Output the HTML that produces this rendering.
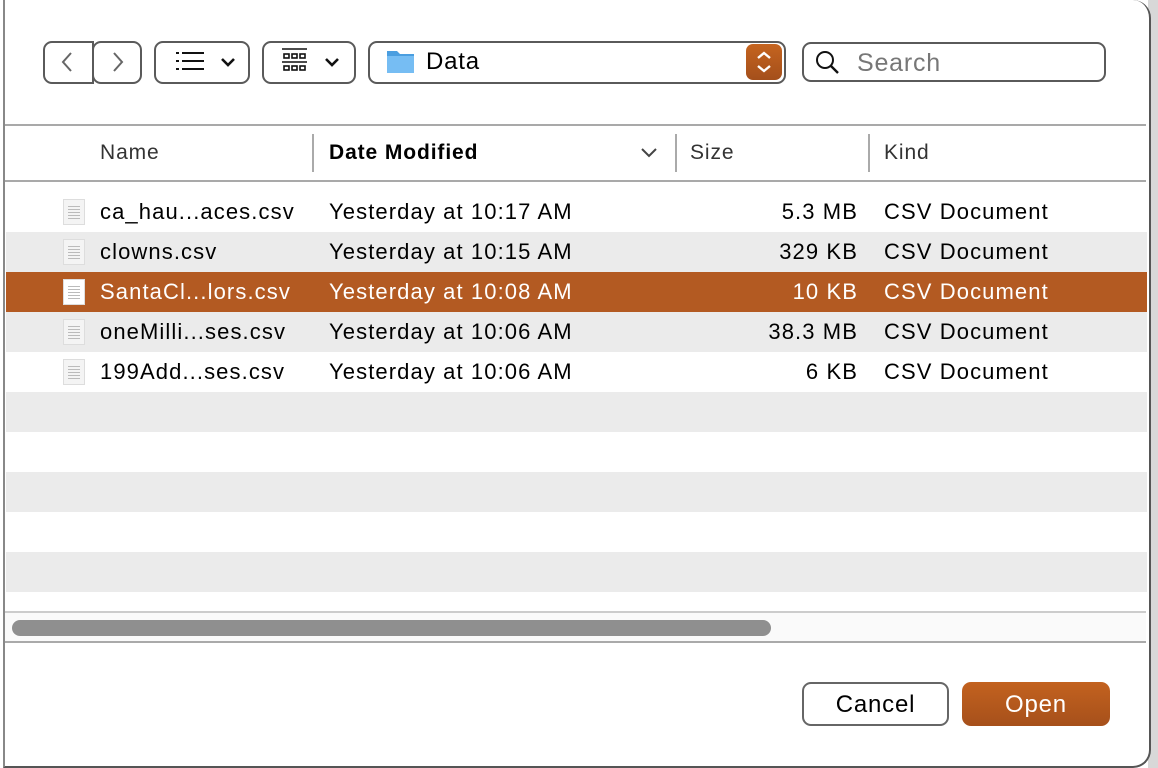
<!DOCTYPE html>
<html><head><style>
body{margin:0;width:1158px;height:768px;background:#fff;position:relative;overflow:hidden;font-family:"Liberation Sans",sans-serif;color:#000}
.a{position:absolute}
.btn{position:absolute;border:2px solid #5a5a5a;border-radius:9px;box-sizing:border-box;background:#fff}
.row{position:absolute;left:6px;width:1141px;height:40px;font-size:22px;line-height:40px;letter-spacing:1.1px}
.row span{position:absolute}
.g{background:#ebebeb}
.sel{background:#b35a22;color:#fff}
.ic{position:absolute;left:57px;top:7px;width:22px;height:26px;background:#f4f4f4;border:1px solid #ddd;box-sizing:border-box}
.ic:after{content:"";position:absolute;left:4px;top:6px;width:12px;height:14px;background:repeating-linear-gradient(#bbb 0 1px,transparent 1px 3px)}
.h{font-size:21px;letter-spacing:0.9px}
</style></head><body>
<div class="a" style="left:1148px;top:0;width:10px;height:768px;background:#d8d8d8"></div>
<div class="a" style="top:0;height:766px;border-right:2px solid #555;border-bottom:2px solid #555;border-left:2px solid #888;left:3px;width:1144px;border-radius:0 18px 18px 0;background:#fff"></div>
<div class="btn" style="left:43px;top:41px;width:51px;height:43px;border-radius:9px 0 0 9px"></div>
<div class="btn" style="left:92px;top:41px;width:50px;height:43px"></div>
<svg class="a" style="left:58px;top:50px" width="20" height="24"><path d="M13 3L5 12l8 9" stroke="#666" stroke-width="2" fill="none"/></svg>
<svg class="a" style="left:108px;top:50px" width="20" height="24"><path d="M6 3l8 9-8 9" stroke="#666" stroke-width="2" fill="none"/></svg>
<div class="btn" style="left:154px;top:41px;width:96px;height:43px"></div>
<svg class="a" style="left:176px;top:50px" width="70" height="24"><g fill="#111"><rect x="0" y="2" width="3" height="2"/><rect x="0" y="10" width="3" height="2"/><rect x="0" y="18" width="3" height="2"/><rect x="6" y="2" width="22" height="2"/><rect x="6" y="10" width="22" height="2"/><rect x="6" y="18" width="22" height="2"/></g><path d="M46 9l6 6 6-6" stroke="#111" stroke-width="2.6" fill="none"/></svg>
<div class="btn" style="left:262px;top:41px;width:94px;height:43px"></div>
<svg class="a" style="left:282px;top:47px" width="70" height="30"><g stroke="#111" stroke-width="1.6" fill="none"><line x1="0" y1="2" x2="25" y2="2"/><rect x="2" y="7" width="5" height="4"/><rect x="10" y="7" width="5" height="4"/><rect x="18" y="7" width="5" height="4"/><line x1="0" y1="15" x2="25" y2="15"/><rect x="2" y="19" width="5" height="4"/><rect x="10" y="19" width="5" height="4"/><rect x="18" y="19" width="5" height="4"/></g><path d="M44 12l6 6 6-6" stroke="#111" stroke-width="2.6" fill="none"/></svg>
<div class="btn" style="left:368px;top:41px;width:418px;height:43px"></div>
<svg class="a" style="left:387px;top:48px" width="28" height="28"><path d="M0 3h10l3 3h14v19H0z" fill="#4a9ee0"/><rect x="0" y="8" width="27" height="17" fill="#76bdf3"/></svg>
<div class="a" style="left:426px;top:48px;font-size:24px;letter-spacing:0.8px">Data</div>
<div class="a" style="left:746px;top:44px;width:36px;height:36px;border-radius:7px;background:linear-gradient(#c5641f,#a44f1b)"></div>
<svg class="a" style="left:755px;top:49px" width="18" height="26"><path d="M3 9l6-5 6 5M3 17l6 5 6-5" stroke="#fff" stroke-width="2.4" fill="none"/></svg>
<div class="btn" style="left:802px;top:42px;width:304px;height:40px"></div>
<svg class="a" style="left:814px;top:49px" width="30" height="28"><circle cx="11" cy="11" r="8" stroke="#111" stroke-width="2" fill="none"/><path d="M17 17l7 7" stroke="#111" stroke-width="2.4"/></svg>
<div class="a" style="left:857px;top:49px;font-size:25px;color:#777;letter-spacing:0.8px">Search</div>
<div class="a" style="left:5px;top:124px;width:1141px;height:2px;background:#a9a9a9"></div>
<div class="a" style="left:5px;top:180px;width:1141px;height:2px;background:#a9a9a9"></div>
<div class="a" style="left:312px;top:134px;width:2px;height:38px;background:#aaa"></div>
<div class="a" style="left:675px;top:134px;width:2px;height:38px;background:#aaa"></div>
<div class="a" style="left:868px;top:134px;width:2px;height:38px;background:#aaa"></div>
<div class="a h" style="left:100px;top:141px;color:#333">Name</div>
<div class="a h" style="left:329px;top:141px;font-weight:bold">Date Modified</div>
<svg class="a" style="left:640px;top:146px" width="20" height="14"><path d="M2 3l7 7 7-7" stroke="#444" stroke-width="2" fill="none"/></svg>
<div class="a h" style="left:690px;top:141px;color:#333">Size</div>
<div class="a h" style="left:884px;top:141px;color:#333">Kind</div>
<div class="row" style="top:192px"><div class="ic"></div><span style="left:94px">ca_hau...aces.csv</span><span style="left:323px">Yesterday at 10:17 AM</span><span style="right:289px">5.3 MB</span><span style="left:878px">CSV Document</span></div>
<div class="row g" style="top:232px"><div class="ic"></div><span style="left:94px">clowns.csv</span><span style="left:323px">Yesterday at 10:15 AM</span><span style="right:289px">329 KB</span><span style="left:878px">CSV Document</span></div>
<div class="row sel" style="top:272px"><div class="ic" style="background:#fff"></div><span style="left:94px">SantaCl...lors.csv</span><span style="left:323px">Yesterday at 10:08 AM</span><span style="right:289px">10 KB</span><span style="left:878px">CSV Document</span></div>
<div class="row g" style="top:312px"><div class="ic"></div><span style="left:94px">oneMilli...ses.csv</span><span style="left:323px">Yesterday at 10:06 AM</span><span style="right:289px">38.3 MB</span><span style="left:878px">CSV Document</span></div>
<div class="row" style="top:352px"><div class="ic"></div><span style="left:94px">199Add...ses.csv</span><span style="left:323px">Yesterday at 10:06 AM</span><span style="right:289px">6 KB</span><span style="left:878px">CSV Document</span></div>
<div class="row g" style="top:392px"></div>
<div class="row g" style="top:472px"></div>
<div class="row g" style="top:552px"></div>
<div class="a" style="left:5px;top:611px;width:1141px;height:32px;background:#fafafa;border-top:2px solid #ccc;border-bottom:2px solid #aaa;box-sizing:border-box"></div>
<div class="a" style="left:12px;top:620px;width:759px;height:16px;border-radius:8px;background:#8f8f8f"></div>
<div class="btn" style="left:802px;top:682px;width:147px;height:44px;border-color:#666"></div>
<div class="a" style="left:802px;top:683px;width:147px;height:44px;line-height:44px;text-align:center;font-size:24px;letter-spacing:0.8px">Cancel</div>
<div class="a" style="left:962px;top:682px;width:148px;height:44px;line-height:45px;text-align:center;font-size:24px;color:#fff;border-radius:9px;letter-spacing:0.8px;background:linear-gradient(#c3621f,#a6501b)">Open</div>
</body></html>
